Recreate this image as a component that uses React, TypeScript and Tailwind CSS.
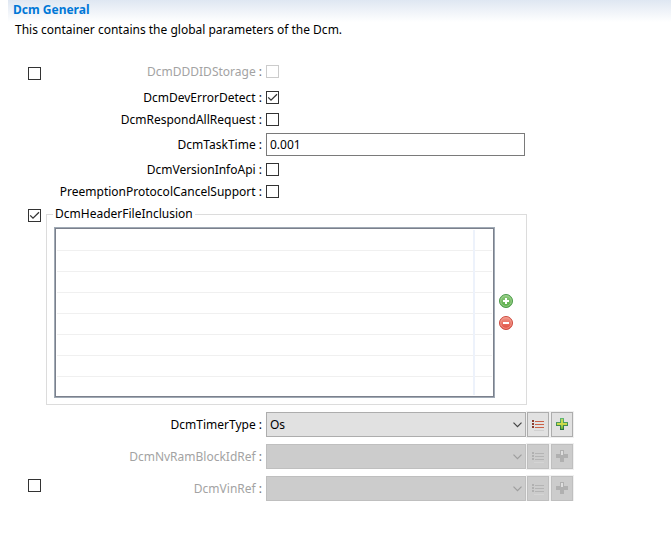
import { useId, type ReactNode } from "react";

type CheckProps = { id?: string; label?: string; checked?: boolean; disabled?: boolean };

function Check({ id, label, checked, disabled }: CheckProps) {
  return (
    <span className="relative block h-[13px] w-[13px] shrink-0">
      <input
        id={id}
        aria-label={label}
        type="checkbox"
        defaultChecked={checked}
        disabled={disabled}
        className="peer block h-[13px] w-[13px] appearance-none border border-[#333333] bg-white disabled:border-[#cccccc]"
      />
      <svg
        viewBox="0 0 13 13"
        className="pointer-events-none absolute inset-0 hidden h-[13px] w-[13px] peer-checked:block"
        fill="none"
        stroke="#333333"
        strokeWidth="1.3"
      >
        <path d="M2.2 6.4 L5 9.2 L11 3.2" />
      </svg>
    </span>
  );
}

type RowProps = {
  label: string;
  htmlFor: string;
  height: string;
  disabled?: boolean;
  toggle?: string;
  children: ReactNode;
};

function Row({ label, htmlFor, height, disabled, toggle, children }: RowProps) {
  return (
    <div className={`flex items-center ${height}`}>
      <div className={`w-[13px] shrink-0 self-start ${toggle ?? ""}`}>
        {toggle && <Check label={`Enable ${label}`} />}
      </div>
      <label htmlFor={htmlFor} className="w-[221px] shrink-0 whitespace-nowrap text-right">
        <span className={disabled ? "text-[#a3a3a3]" : ""}>{label}</span>
        <span className={disabled ? "text-[#777777]" : ""}> :</span>
      </label>
      <div className="ml-1 flex min-w-0 flex-1 items-center">{children}</div>
    </div>
  );
}

function CheckRow({
  label,
  height,
  checked,
  disabled,
  toggle,
}: {
  label: string;
  height: string;
  checked?: boolean;
  disabled?: boolean;
  toggle?: string;
}) {
  const id = useId();
  return (
    <Row label={label} htmlFor={id} height={height} disabled={disabled} toggle={toggle}>
      <Check id={id} checked={checked} disabled={disabled} />
    </Row>
  );
}

function ListIcon({ disabled }: { disabled?: boolean }) {
  const dot = disabled ? "#b0b0b0" : "#8c3a2c";
  const bar = disabled ? "#b4b4b4" : "#cc6248";
  return (
    <svg width="14" height="13" viewBox="0 0 14 13" shapeRendering="crispEdges">
      {[2, 5, 8].map((y) => (
        <g key={y}>
          <rect x="1" y={y} width="2" height="2" fill={dot} />
          <rect x="4" y={y + 1} width="9" height="1" fill={bar} />
        </g>
      ))}
      <rect x="3" y="12" width="10" height="1" fill={disabled ? "#d4d4d4" : "#d0d0d0"} />
    </svg>
  );
}

function PlusIcon({ disabled }: { disabled?: boolean }) {
  return (
    <svg width="12" height="13" viewBox="0 0 12 13" shapeRendering="crispEdges">
      <defs>
        <linearGradient id="plus-edge" x1="0" y1="0" x2="0" y2="1">
          <stop offset="0" stopColor="#62b878" />
          <stop offset="1" stopColor="#286f3c" />
        </linearGradient>
        <linearGradient id="plus-fill" x1="0" y1="0" x2="0" y2="1">
          <stop offset="0" stopColor="#b9d85c" />
          <stop offset="0.5" stopColor="#d2dc48" />
          <stop offset="1" stopColor="#5fae3c" />
        </linearGradient>
      </defs>
      <path d="M4 0h4v4h4v4H8v4H4V8H0V4h4z" fill={disabled ? "#b0b0b0" : "url(#plus-edge)"} />
      {disabled ? (
        <path d="M5 1h2v4H5z" fill="#dedede" />
      ) : (
        <path d="M5 1h2v4h4v2H7v4H5V7H1V5h4z" fill="url(#plus-fill)" />
      )}
    </svg>
  );
}

function ToolButton({ label, disabled, children }: { label: string; disabled?: boolean; children: ReactNode }) {
  return (
    <button
      type="button"
      aria-label={label}
      disabled={disabled}
      className="flex h-[25px] w-[22px] shrink-0 items-center justify-center border border-[#adadad] bg-[#e1e1e1] outline outline-[#f0f0f0] disabled:border-[#bfbfbf] disabled:bg-[#cccccc]"
    >
      {children}
    </button>
  );
}

function SelectRow({
  label,
  value,
  disabled,
  toggle,
}: {
  label: string;
  value?: string;
  disabled?: boolean;
  toggle?: string;
}) {
  const id = useId();
  return (
    <Row label={label} htmlFor={id} height="h-[25px]" disabled={disabled} toggle={toggle}>
      <div className="relative min-w-0 flex-1">
        <select
          id={id}
          disabled={disabled}
          className="block h-[25px] w-full appearance-none border border-[#adadad] bg-[#e1e1e1] px-[3px] text-black opacity-100 disabled:border-[#bfbfbf] disabled:bg-[#cccccc]"
        >
          <option>{value}</option>
        </select>
        <svg
          width="9"
          height="6"
          viewBox="0 0 9 6"
          className="pointer-events-none absolute right-1 top-[10px]"
          fill="none"
          stroke={disabled ? "#9e9e9e" : "#444444"}
          strokeWidth="1.2"
        >
          <path d="M0.5 0.7 L4.5 4.7 L8.5 0.7" />
        </svg>
      </div>
      <div className="ml-px flex gap-0.5">
        <ToolButton label={`Select ${label}`} disabled={disabled}>
          <ListIcon disabled={disabled} />
        </ToolButton>
        <ToolButton label={`Add ${label}`} disabled={disabled}>
          <PlusIcon disabled={disabled} />
        </ToolButton>
      </div>
    </Row>
  );
}

function RoundButton({ kind }: { kind: "add" | "remove" }) {
  const add = kind === "add";
  return (
    <button type="button" aria-label={add ? "Add header file" : "Remove header file"} className="block h-[14px] w-[14px]">
      <svg width="14" height="14" viewBox="0 0 14 14">
        <defs>
          <linearGradient id={`round-${kind}`} x1="0" y1="0" x2="0" y2="1">
            <stop offset="0" stopColor={add ? "#8fca7e" : "#f29a8c"} />
            <stop offset="1" stopColor={add ? "#55ab45" : "#e04a3c"} />
          </linearGradient>
        </defs>
        <circle cx="7" cy="7" r="6.5" fill={`url(#round-${kind})`} stroke={add ? "#4a9a4a" : "#cc4c40"} />
        <circle cx="7" cy="7" r="5.3" fill="none" stroke={add ? "#a3d394" : "#f2a094"} strokeWidth="0.8" />
        <path d={add ? "M6 4h2v2h2v2H8v2H6V8H4V6h2z" : "M4 6h6v2H4z"} fill="#ffffff" />
      </svg>
    </button>
  );
}

export default function App() {
  const taskTime = useId();
  return (
    <main className="bg-white font-['Noto_Sans','Open_Sans',sans-serif] text-[12px] leading-4 text-black">
      <header className="ml-2 h-[22px] bg-linear-to-b from-[#dfe7f2] to-white">
        <h1 className="pl-[5px] pt-0.5 font-bold text-[#0078d7]">Dcm General</h1>
      </header>
      <p className="pl-[15px]">This container contains the global parameters of the Dcm.</p>

      <form className="mt-[21px] pl-7 pr-[98px]">
        <CheckRow label="DcmDDDIDStorage" height="mb-0.5 h-[25px]" disabled toggle="pt-2" />
        <CheckRow label="DcmDevErrorDetect" height="h-[23px]" checked />
        <CheckRow label="DcmRespondAllRequest" height="h-[21px]" />
        <Row label="DcmTaskTime" htmlFor={taskTime} height="h-[29px]">
          <input
            id={taskTime}
            type="text"
            defaultValue="0.001"
            className="mr-12 h-[23px] w-full border border-[#7a7a7a] bg-white px-[3px]"
          />
        </Row>
        <CheckRow label="DcmVersionInfoApi" height="h-[21px]" />
        <CheckRow label="PreemptionProtocolCancelSupport" height="h-[23px]" />

        <div className="mb-[7px] mt-[3px] flex">
          <div className="mr-[5px] pt-[3px]">
            <Check label="Enable DcmHeaderFileInclusion" checked />
          </div>
          <fieldset className="mr-[46px] min-w-0 flex-1 border border-[#dcdcdc] px-[7px] pb-[6px]">
            <legend className="-ml-px px-0.5">DcmHeaderFileInclusion</legend>
            <div className="mt-[5px] flex items-center gap-1">
              <div className="flex-1 border border-[#a0aab5]">
                <div className="border border-[#7b808c] p-px">
                  <table aria-label="Header files" className="w-full border-collapse">
                    <tbody>
                      <tr className="h-5">
                        <td className="border-b border-[#f0f0f0]" />
                        <td className="w-[18px] border-b border-l-2 border-b-[#f0f0f0] border-l-[#edf2fb]" />
                      </tr>
                      {[1, 2, 3, 4, 5, 6].map((row) => (
                        <tr key={row} className="h-[21px]">
                          <td className="border-b border-[#f0f0f0]" />
                          <td className="w-[18px] border-b border-l-2 border-b-[#f0f0f0] border-l-[#edf2fb]" />
                        </tr>
                      ))}
                      <tr className="h-[19px]">
                        <td />
                        <td className="w-[18px] border-l-2 border-[#edf2fb]" />
                      </tr>
                    </tbody>
                  </table>
                </div>
              </div>
              <div className="mb-0.5 mr-[6px] flex flex-col gap-2">
                <RoundButton kind="add" />
                <RoundButton kind="remove" />
              </div>
            </div>
          </fieldset>
        </div>

        <div className="flex flex-col gap-[7px]">
          <SelectRow label="DcmTimerType" value="Os" />
          <SelectRow label="DcmNvRamBlockIdRef" disabled />
          <SelectRow label="DcmVinRef" disabled toggle="pt-[3px]" />
        </div>
      </form>
    </main>
  );
}
